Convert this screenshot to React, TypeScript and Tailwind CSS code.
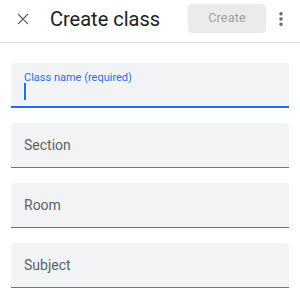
import { X, MoreVertical } from 'lucide-react';

const FIELDS = ['Section', 'Room', 'Subject'];

export default function App() {
  return (
    <div className="h-[293px] w-[300px] overflow-hidden bg-white font-['Roboto',sans-serif]">
      <header className="flex h-[43px] items-center border-b border-[#e0e0e0] pb-[5px] pl-[14px] pr-[10px]">
        <button className="flex h-[18px] w-[18px] items-center justify-center text-[#5f6368]" aria-label="Close">
          <X className="h-[18px] w-[18px]" strokeWidth={1.6} />
        </button>
        <h1 className="ml-[18px] flex-1 text-[20px] leading-none text-[#202124]">Create class</h1>
        <button
          disabled
          className="h-[29px] w-[78px] rounded-[4px] bg-[#ebebeb] text-[12.5px] tracking-[0.2px] text-[#9e9e9e]"
        >
          Create
        </button>
        <button className="ml-[6px] flex h-[18px] w-[18px] items-center justify-center text-[#5f6368]" aria-label="More">
          <MoreVertical className="h-[18px] w-[18px]" strokeWidth={2.6} />
        </button>
      </header>

      <div className="flex flex-col gap-[15px] px-[11px] pt-[20px]">
        <div className="relative h-[45px] rounded-t-[4px] border-b-2 border-[#1a73e8] bg-[#f1f3f4]">
          <span className="absolute left-[13px] top-[7px] text-[11px] leading-[16px] text-[#1a73e8]">
            Class name (required)
          </span>
          <span className="absolute left-[13px] top-[20px] h-[17px] w-[2px] bg-[#1a73e8]" />
        </div>
        {FIELDS.map((label) => (
          <div
            key={label}
            className="flex h-[45px] items-center rounded-t-[4px] border-b border-[#757575] bg-[#f1f3f4] pl-[13px] text-[14px] text-[#5f6368]"
          >
            {label}
          </div>
        ))}
      </div>
    </div>
  );
}
